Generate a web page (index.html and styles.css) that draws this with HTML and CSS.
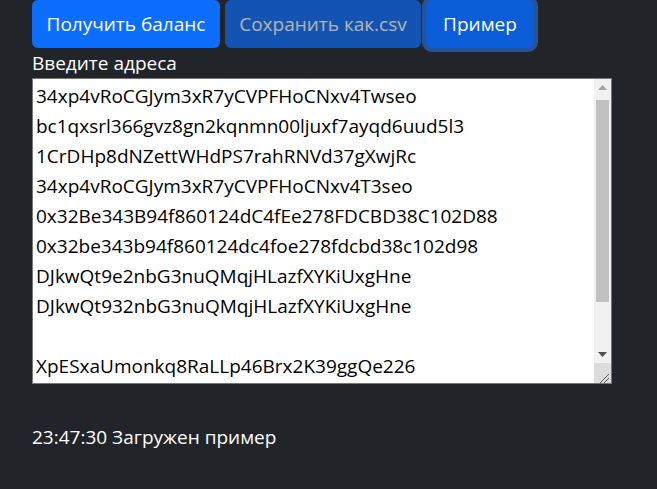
FILE: index.html
```html
<!DOCTYPE html>
<html lang="ru">
<head>
<meta charset="utf-8">
<title>Баланс</title>
<link rel="stylesheet" href="styles.css">
</head>
<body>
<main class="page">
  <div class="toolbar">
    <button class="btn btn-primary btn-get">Получить баланс</button>
    <button class="btn btn-primary btn-save" disabled>Сохранить как.csv</button>
    <button class="btn btn-primary btn-example is-focused">Пример</button>
  </div>
  <label class="field-label">Введите адреса</label>
  <div class="textarea">
    <div class="lines">
      <div class="line">34xp4vRoCGJym3xR7yCVPFHoCNxv4Twseo</div>
      <div class="line">bc1qxsrl366gvz8gn2kqnmn00ljuxf7ayqd6uud5l3</div>
      <div class="line">1CrDHp8dNZettWHdPS7rahRNVd37gXwjRc</div>
      <div class="line">34xp4vRoCGJym3xR7yCVPFHoCNxv4T3seo</div>
      <div class="line">0x32Be343B94f860124dC4fEe278FDCBD38C102D88</div>
      <div class="line">0x32be343b94f860124dc4foe278fdcbd38c102d98</div>
      <div class="line">DJkwQt9e2nbG3nuQMqjHLazfXYKiUxgHne</div>
      <div class="line">DJkwQt932nbG3nuQMqjHLazfXYKiUxgHne</div>
      <div class="line">&nbsp;</div>
      <div class="line">XpESxaUmonkq8RaLLp46Brx2K39ggQe226</div>
    </div>
    <div class="scrollbar">
      <div class="sb-btn">
        <svg width="9" height="5" viewBox="0 0 9 5"><polygon points="0,5 4.5,0 9,5" fill="#a3a3a3"/></svg>
      </div>
      <div class="sb-track">
        <div class="sb-thumb"></div>
      </div>
      <div class="sb-btn">
        <svg width="9" height="5" viewBox="0 0 9 5"><polygon points="0,0 9,0 4.5,5" fill="#505050"/></svg>
      </div>
      <div class="sb-resizer">
        <svg width="17" height="20" viewBox="0 0 17 20"><line x1="15" y1="11" x2="6" y2="20" stroke="#5a5a5a" stroke-width="1"/><line x1="15" y1="15" x2="10" y2="20" stroke="#5a5a5a" stroke-width="1"/></svg>
      </div>
    </div>
  </div>
  <p class="status">23:47:30 Загружен пример</p>
</main>
</body>
</html>
```
FILE: styles.css
```css
* { box-sizing: border-box; }

html, body {
  margin: 0;
  padding: 0;
  background: #212529;
}

body {
  font-family: "Open Sans", "Noto Sans", sans-serif;
  font-size: 19px;
  color: #ffffff;
  width: 657px;
  height: 489px;
  overflow: hidden;
}

.page {
  padding: 0 45px 0 32px;
  display: flex;
  flex-direction: column;
}

.toolbar {
  display: flex;
  gap: 5px;
  height: 48px;
}

.btn {
  font: inherit;
  height: 48px;
  border: 0;
  border-radius: 6px;
  color: #ffffff;
  padding: 0;
  display: flex;
  align-items: center;
  justify-content: center;
}

.btn-primary { background: #0d6efd; }
.btn-get { width: 188px; }
.btn-save {
  width: 196px;
  opacity: 0.65;
}
.btn-example {
  width: 108px;
  background: #0b5ed7;
}
.is-focused {
  box-shadow: 0 0 0 4px rgba(49, 132, 253, 0.5);
}

.field-label {
  display: block;
  margin-top: 2px;
  line-height: 27px;
  height: 28px;
}

.textarea {
  width: 580px;
  height: 306px;
  background: #ffffff;
  border: 1px solid #767676;
  display: flex;
  overflow: hidden;
}

.lines {
  flex: 1;
  padding: 2px 3px 0;
  color: #000000;
  line-height: 30px;
  overflow: hidden;
  white-space: nowrap;
}

.line { height: 30px; }

.scrollbar {
  width: 17px;
  background: #f1f1f1;
  display: flex;
  flex-direction: column;
}

.sb-btn {
  height: 17px;
  display: flex;
  align-items: center;
  justify-content: center;
}

.sb-track {
  flex: 1;
  padding: 4px 2px 0;
}

.sb-thumb {
  height: 202px;
  background: #c1c1c1;
}

.sb-resizer {
  height: 20px;
  background: #dcdcdc;
  display: flex;
}

.status {
  margin: 40px 0 0;
  line-height: 27px;
}
```
